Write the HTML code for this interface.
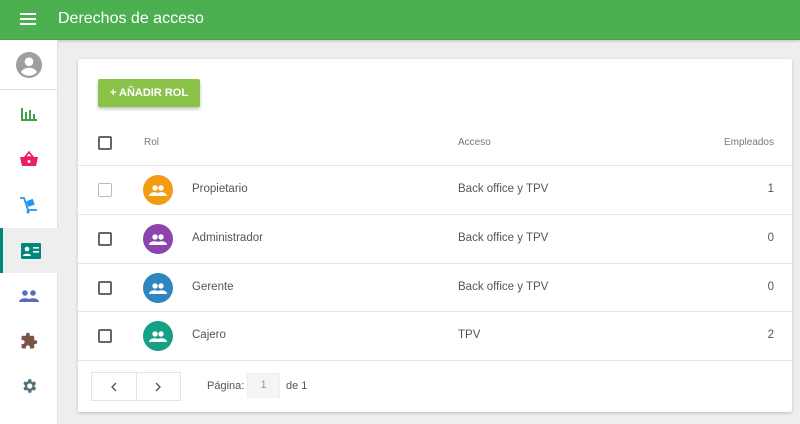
<!DOCTYPE html>
<html><head><meta charset="utf-8"><style>
*{box-sizing:border-box;margin:0;padding:0}
body{width:800px;height:424px;overflow:hidden;background:#eeeeee;font-family:"Liberation Sans",sans-serif;position:relative}
.hdr{position:absolute;left:0;top:0;width:800px;height:40px;background:#4caf50;border-bottom:1px solid #43a047;box-shadow:0 1px 3px rgba(0,0,0,.2)}
.hdr .t{position:absolute;left:58px;top:10px;color:#fff;font-size:16px}
.side{position:absolute;left:0;top:40px;width:58px;height:384px;background:#fff;border-right:1px solid #e0e0e0}
.si{position:absolute;left:0;width:58px;height:45px;display:flex;align-items:center;justify-content:center}
.card{position:absolute;left:78px;top:59px;width:714px;height:353px;background:#fff;box-shadow:0 1px 3px rgba(0,0,0,.2);border-radius:2px}
.btn{position:absolute;left:20px;top:20px;width:102px;height:28px;background:#8bc34a;color:#fff;font-size:11px;font-weight:bold;display:flex;align-items:center;justify-content:center;box-shadow:0 2px 3px rgba(0,0,0,.25);border-radius:2px}
.row{position:absolute;left:0;width:714px;border-bottom:1px solid #e6e6e6;font-size:11.5px;color:#555}
.cb{position:absolute;left:20px;width:14px;height:14px;border:2px solid #666;border-radius:2px}
.av{position:absolute;left:65px;width:30px;height:30px;border-radius:50%;display:flex;align-items:center;justify-content:center}
.abs{position:absolute}
</style></head><body>
<div class="hdr">
<svg class="abs" style="left:20px;top:12px" width="16" height="14"><rect y="1" width="16" height="2" fill="#fff"/><rect y="6" width="16" height="2" fill="#fff"/><rect y="11" width="16" height="2" fill="#fff"/></svg>
<div class="t">Derechos de acceso</div></div>
<div class="side">
<div class="si" style="top:0;height:50px;border-bottom:1px solid #e0e0e0"><svg width="26" height="26" viewBox="0 0 24 24"><circle cx="12" cy="12" r="12" fill="#9e9e9e"/><circle cx="12" cy="9" r="4" fill="#fff"/><path d="M4.5 18.5c2-3 4.5-4 7.5-4s5.5 1 7.5 4A10 10 0 0 1 4.5 18.5z" fill="#fff"/></svg></div>
<div class="si" style="top:51px"><svg width="18" height="16"><g fill="#43a047"><rect x="1" y="2" width="2" height="12"/><rect x="5" y="6" width="2" height="8"/><rect x="9" y="4" width="2" height="10"/><rect x="13" y="8" width="2" height="6"/><rect x="1" y="13" width="16" height="2"/></g></svg></div>
<div class="si" style="top:96px"><svg width="18" height="16"><path d="M5 6L9 1l4 5z" fill="none" stroke="#e91e63" stroke-width="1.6"/><path d="M0 6h18l-2 9H2z" fill="#e91e63"/><circle cx="9" cy="10.5" r="1.5" fill="#fff"/></svg></div>
<div class="si" style="top:142px"><svg width="20" height="18"><path d="M1 2h4l4 12h9" fill="none" stroke="#2196f3" stroke-width="1.8"/><rect x="8" y="4" width="7" height="6" fill="#2196f3" transform="rotate(-20 11 7)"/><circle cx="9" cy="16" r="1.5" fill="#2196f3"/></svg></div>
<div class="si" style="top:188px;background:#eeeeee;border-left:3px solid #00897b"><svg width="20" height="16"><rect width="20" height="16" rx="1" fill="#00897b"/><circle cx="6" cy="6" r="2.3" fill="#fff"/><path d="M2 13c0-3 8-3 8 0z" fill="#fff"/><rect x="12" y="4" width="6" height="1.6" fill="#fff"/><rect x="12" y="8" width="6" height="1.6" fill="#fff"/></svg></div>
<div class="si" style="top:233px"><svg width="20" height="12"><g fill="#5c6bc0"><circle cx="6" cy="3" r="2.8"/><circle cx="14" cy="3" r="2.8"/><path d="M0 12c0-5 12-5 12 0z"/><path d="M8 12c0-5 12-5 12 0z"/></g></svg></div>
<div class="si" style="top:278px"><svg width="18" height="18" viewBox="0 0 24 24"><path fill="#795548" d="M20.5 11H19V7c0-1.1-.9-2-2-2h-4V3.5a2.5 2.5 0 0 0-5 0V5H4c-1.1 0-2 .9-2 2v3.8h1.5c1.5 0 2.7 1.2 2.7 2.7S5 16.2 3.5 16.2H2V20c0 1.1.9 2 2 2h3.8v-1.5c0-1.5 1.2-2.7 2.7-2.7s2.7 1.200 2.7 2.7V22H17c1.1 0 2-.9 2-2v-4h1.5a2.5 2.5 0 0 0 0-5z"/></svg></div>
<div class="si" style="top:323px"><svg width="18" height="18" viewBox="0 0 24 24"><path fill="#546e7a" d="M19.4 13a7.5 7.5 0 0 0 0-2l2.1-1.6-2-3.5-2.5 1a7 7 0 0 0-1.700-1L15 3h-4l-.4 2.9a7 7 0 0 0-1.7 1l-2.5-1-2 3.5L6.6 11a7.5 7.5 0 0 0 0 2l-2.1 1.6 2 3.5 2.5-1a7 7 0 0 0 1.7 1L11 21h4l.4-2.9a7 7 0 0 0 1.7-1l2.5 1 2-3.5zM13 15.5a3.5 3.5 0 1 1 0-7 3.5 3.5 0 0 1 0 7z"/></svg></div>
</div>
<div class="card">
<div class="btn">+ AÑADIR ROL</div>
<div class="row" style="top:62px;height:45px;font-size:10px;color:#777">
<div class="cb" style="top:15px"></div>
<div class="abs" style="left:66px;top:16px">Rol</div>
<div class="abs" style="left:380px;top:16px">Acceso</div>
<div class="abs" style="right:18px;top:16px">Empleados</div></div>
<div class="row" style="top:107px;height:49px">
<div class="cb" style="top:17px;border:1px solid #bbb"></div>
<div class="av" style="top:9px;background:#f39c12"><svg width="18" height="11"><g fill="#fff"><circle cx="6" cy="3" r="2.7"/><circle cx="12" cy="3" r="2.7"/><path d="M0 11c0-5 11-5 11 0z"/><path d="M7 11c0-5 11-5 11 0z"/></g></svg></div>
<div class="abs" style="left:114px;top:17px">Propietario</div>
<div class="abs" style="left:380px;top:17px">Back office y TPV</div>
<div class="abs" style="right:18px;top:17px">1</div></div>
<div class="row" style="top:156px;height:49px">
<div class="cb" style="top:17px"></div>
<div class="av" style="top:9px;background:#8e44ad"><svg width="18" height="11"><g fill="#fff"><circle cx="6" cy="3" r="2.7"/><circle cx="12" cy="3" r="2.7"/><path d="M0 11c0-5 11-5 11 0z"/><path d="M7 11c0-5 11-5 11 0z"/></g></svg></div>
<div class="abs" style="left:114px;top:17px">Administrador</div>
<div class="abs" style="left:380px;top:17px">Back office y TPV</div>
<div class="abs" style="right:18px;top:17px">0</div></div>
<div class="row" style="top:205px;height:48px">
<div class="cb" style="top:17px"></div>
<div class="av" style="top:9px;background:#2e86c1"><svg width="18" height="11"><g fill="#fff"><circle cx="6" cy="3" r="2.7"/><circle cx="12" cy="3" r="2.7"/><path d="M0 11c0-5 11-5 11 0z"/><path d="M7 11c0-5 11-5 11 0z"/></g></svg></div>
<div class="abs" style="left:114px;top:17px">Gerente</div>
<div class="abs" style="left:380px;top:17px">Back office y TPV</div>
<div class="abs" style="right:18px;top:17px">0</div></div>
<div class="row" style="top:253px;height:49px">
<div class="cb" style="top:17px"></div>
<div class="av" style="top:9px;background:#16a085"><svg width="18" height="11"><g fill="#fff"><circle cx="6" cy="3" r="2.7"/><circle cx="12" cy="3" r="2.7"/><path d="M0 11c0-5 11-5 11 0z"/><path d="M7 11c0-5 11-5 11 0z"/></g></svg></div>
<div class="abs" style="left:114px;top:17px">Cajero</div>
<div class="abs" style="left:380px;top:17px">TPV</div>
<div class="abs" style="right:18px;top:17px">2</div></div>
<div class="abs" style="left:13px;top:313px;width:90px;height:29px;border:1px solid #e3e3e3;display:flex">
<div style="width:45px;border-right:1px solid #e3e3e3;display:flex;align-items:center;justify-content:center"><svg width="8" height="10"><path d="M6 1L2 5l4 4" fill="none" stroke="#555" stroke-width="1.4"/></svg></div>
<div style="width:44px;display:flex;align-items:center;justify-content:center"><svg width="8" height="10"><path d="M2 1l4 4-4 4" fill="none" stroke="#555" stroke-width="1.4"/></svg></div></div>
<div class="abs" style="left:129px;top:321px;font-size:11px;color:#555">Página:</div>
<div class="abs" style="left:169px;top:314px;width:33px;height:25px;background:#f5f5f5;border:1px solid #eee;font-size:11px;color:#999;text-align:center;line-height:23px">1</div>
<div class="abs" style="left:208px;top:321px;font-size:11px;color:#555">de 1</div>
</div>
</body></html>
